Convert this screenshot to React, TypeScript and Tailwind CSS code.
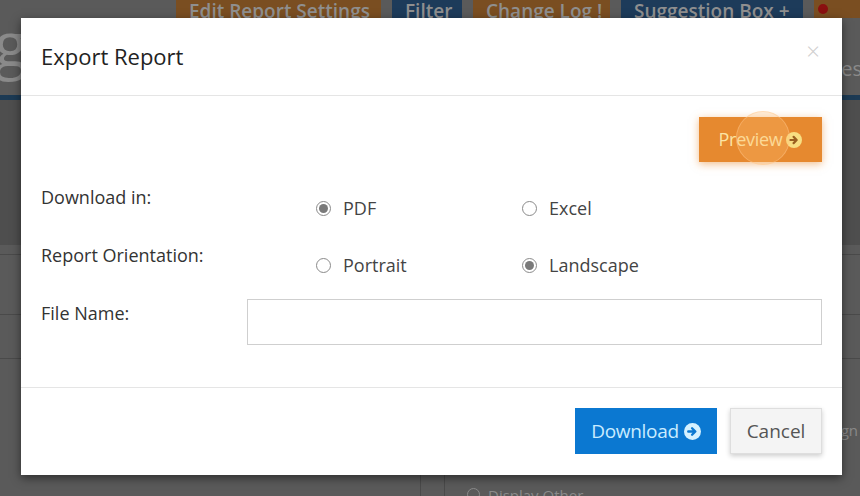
import React, { useState } from 'react';

const font = { fontFamily: '"Open Sans", "Liberation Sans", sans-serif' };

const CircleArrow: React.FC<{ fill: string; arrow: string; size?: number }> = ({ fill, arrow, size = 16 }) => (
  <svg width={size} height={size} viewBox="0 0 16 16" className="inline-block">
    <circle cx="8" cy="8" r="8" fill={fill} />
    <path d="M4 8h6.2M7.6 4.9L10.7 8l-3.1 3.1" stroke={arrow} strokeWidth="2.2" fill="none" strokeLinecap="round" strokeLinejoin="round" />
  </svg>
);

const Radio: React.FC<{ checked: boolean; label: string; onClick: () => void }> = ({ checked, label, onClick }) => (
  <button type="button" onClick={onClick} className="flex items-center gap-[12px] text-[18px] leading-[24px] text-[#444]">
    <span className="w-[15px] h-[15px] rounded-full border border-[#8a8a8a] bg-white flex items-center justify-center">
      {checked && <span className="w-[9px] h-[9px] rounded-full bg-[#7a7a7a]" />}
    </span>
    {label}
  </button>
);

const Backdrop: React.FC = () => (
  <div className="absolute inset-0 flex flex-col bg-[#5a5a5a]">
    <div className="h-[18px] flex gap-[11px] pl-[176px] text-[19px] leading-[18px] font-semibold text-[#8f8f8f] overflow-hidden">
      <span className="bg-[#7a4e21] px-[13px] w-[205px] pt-[2px] whitespace-nowrap">Edit Report Settings</span>
      <span className="bg-[#1d3b5a] px-[13px] w-[70px] pt-[2px]">Filter</span>
      <span className="bg-[#7a4e21] px-[13px] w-[137px] pt-[2px] whitespace-nowrap">Change Log !</span>
      <span className="bg-[#1d3b5a] px-[13px] w-[190px] pt-[2px] whitespace-nowrap">Suggestion Box +</span>
      <span className="bg-[#7a4e21] px-[4px] w-[60px] flex items-center">
        <span className="w-[10px] h-[10px] rounded-full bg-[#8a1010]" />
      </span>
    </div>
    <div className="h-[77px] flex justify-between items-start text-[#8a8a8a]">
      <span className="text-[62px] leading-[62px] -ml-[6px] -mt-[6px]">g</span>
      <span className="text-[20px] mt-[36px] -mr-[2px]">es</span>
    </div>
    <div className="h-[5px] bg-[#1c3a54]" />
    <div className="h-[145px] bg-[#4e4e4e]" />
    <div className="h-[10px] border-b border-[#4a4a4a]" />
    <div className="h-[60px] border-b border-[#4a4a4a]" />
    <div className="h-[44px] border-b border-[#4a4a4a]" />
    <div className="flex-1 flex">
      <div className="w-[420px]" />
      <div className="w-[25px] border-l border-r border-[#4a4a4a]" />
      <div className="flex-1 flex flex-col justify-end pl-[22px]">
        <div className="flex items-center gap-[8px] text-[#8a8a8a] text-[15px] leading-[10px] h-[10px] overflow-visible">
          <span className="w-[13px] h-[13px] rounded-full border border-[#8a8a8a] -mb-[6px]" />
          <span className="-mb-[8px]">Display Other</span>
        </div>
        <div className="text-[#8a8a8a] text-[15px] text-right pr-[2px] absolute right-0 top-[419px]">ign</div>
      </div>
    </div>
  </div>
);

export default function App() {
  const [format, setFormat] = useState<'pdf' | 'excel'>('pdf');
  const [orientation, setOrientation] = useState<'portrait' | 'landscape'>('landscape');
  const [fileName, setFileName] = useState('');

  return (
    <div className="relative w-[860px] h-[496px] overflow-hidden" style={font}>
      <Backdrop />
      <div className="absolute left-[21px] top-[18px] w-[821px] h-[457px] bg-white shadow-[0_3px_9px_rgba(0,0,0,0.5)] flex flex-col">
        <div className="h-[78px] border-b border-[#e5e5e5] flex items-center justify-between pl-[20px] pr-[20px]">
          <h4 className="text-[22px] text-[#222] -mt-[1px]">Export Report</h4>
          <span className="text-[24px] leading-none text-[#cfcfcf] font-light -mt-[12px] mr-[2px]">×</span>
        </div>
        <div className="px-[20px] pt-[21px] pb-[42px] flex flex-col">
          <div className="flex justify-end">
            <button
              type="button"
              className="w-[123px] h-[45px] bg-[#e6892f] text-[#fbe4a4] text-[18px] tracking-[-0.3px] flex items-center justify-center gap-[4px] shadow-[0_2px_8px_rgba(230,137,47,0.55)] relative"
            >
              Preview
              <CircleArrow fill="#f8df82" arrow="#9a6020" />
              <span className="absolute left-[37px] top-[-6px] w-[54px] h-[54px] rounded-full bg-[rgba(255,190,120,0.28)] border border-[rgba(255,200,140,0.45)]" />
            </button>
          </div>
          <div className="flex items-start mt-[23px] h-[58px]">
            <div className="w-[275px] text-[18px] leading-[24px] text-[#333]">Download in:</div>
            <div className="flex items-start pt-[11px]">
              <div className="w-[206px]">
                <Radio checked={format === 'pdf'} label="PDF" onClick={() => setFormat('pdf')} />
              </div>
              <div>
                <Radio checked={format === 'excel'} label="Excel" onClick={() => setFormat('excel')} />
              </div>
            </div>
          </div>
          <div className="flex items-start h-[56px]">
            <div className="w-[275px] text-[18px] leading-[24px] text-[#333]">Report Orientation:</div>
            <div className="flex items-start pt-[10px]">
              <div className="w-[206px]">
                <Radio checked={orientation === 'portrait'} label="Portrait" onClick={() => setOrientation('portrait')} />
              </div>
              <div>
                <Radio checked={orientation === 'landscape'} label="Landscape" onClick={() => setOrientation('landscape')} />
              </div>
            </div>
          </div>
          <div className="flex items-start">
            <div className="w-[206px] text-[18px] leading-[24px] text-[#333] mt-[2px]">File Name:</div>
            <input
              value={fileName}
              onChange={(event) => setFileName(event.target.value)}
              className="flex-1 h-[46px] border border-[#cfcfcf] px-[12px] text-[16px] outline-none"
            />
          </div>
        </div>
        <div className="border-t border-[#e5e5e5] flex justify-end gap-[13px] px-[20px] pt-[20px]">
          <button
            type="button"
            className="w-[142px] h-[46px] bg-[#0b78d1] text-[#c9ecff] text-[19px] tracking-[-0.3px] flex items-center justify-center gap-[5px]"
          >
            Download
            <CircleArrow fill="#d5f1ff" arrow="#0b78d1" size={17} />
          </button>
          <button
            type="button"
            className="w-[92px] h-[46px] bg-[#f4f4f4] border border-[#dedede] text-[#555] text-[19px] shadow-[0_2px_5px_rgba(0,0,0,0.2)]"
          >
            Cancel
          </button>
        </div>
      </div>
    </div>
  );
}
